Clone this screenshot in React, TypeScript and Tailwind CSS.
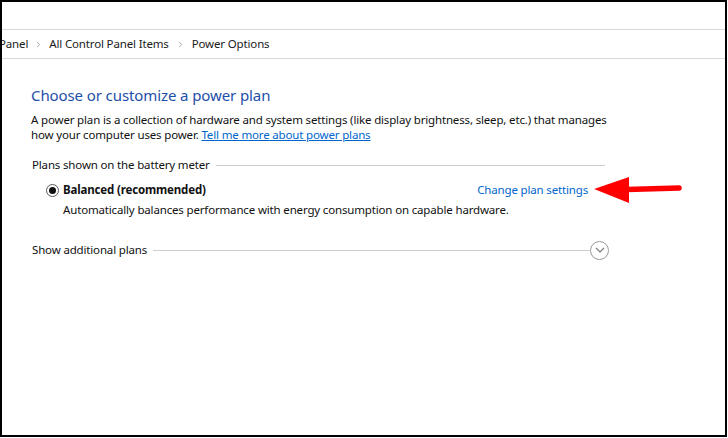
import { ChevronRight } from "lucide-react";

const font = { fontFamily: '"Noto Sans", "Open Sans", sans-serif' };

function Breadcrumb() {
    return (
        <div className="relative h-[29px] flex flex-row items-center overflow-hidden border-b border-[#d9d9d9] text-[11.5px] tracking-[-0.15px] text-[#1a1a1a] whitespace-nowrap">
            <span className="-ml-[3px]">Panel</span>
            <ChevronRight className="mx-[6px] w-[9px] h-[9px] text-[#8a8a8a]" strokeWidth={2} />
            <span>All Control Panel Items</span>
            <ChevronRight className="mx-[7px] w-[9px] h-[9px] text-[#8a8a8a]" strokeWidth={2} />
            <span>Power Options</span>
        </div>
    )
}

function Radio() {
    return (
        <div className="relative w-[13px] h-[13px] rounded-full border border-[#5a5a5a] flex justify-center items-center bg-white">
            <div className="w-[7px] h-[7px] rounded-full bg-[#111]" />
        </div>
    )
}

function Arrow() {
    return (
        <svg className="absolute left-[593px] top-[177px]" width="90" height="28" viewBox="0 0 90 28">
            <path d="M1 12 L36 0 L36 26 Z" fill="#ff0000" />
            <line x1="34" y1="12.5" x2="86" y2="11" stroke="#ff0000" strokeWidth="5.5" strokeLinecap="round" />
        </svg>
    )
}

export default function App() {
    return (
        <div className="relative w-[728px] h-[438px] bg-white overflow-hidden" style={font}>
            <div className="relative w-[727px] h-[437px] border-2 border-black flex flex-col">
                <div className="h-[28px] border-b border-[#d9d9d9]" />
                <Breadcrumb />

                <div className="relative flex flex-col pl-[29px] w-[603px] whitespace-nowrap">
                    <h1 className="mt-[25px] h-[22px] leading-[22px] text-[15px] text-[#1e4fa8] tracking-[-0.1px]">
                        Choose or customize a power plan
                    </h1>
                    <p className="mt-[6px] text-[11.5px] leading-[15px] text-[#111] tracking-[-0.16px]">
                        A power plan is a collection of hardware and system settings (like display brightness, sleep, etc.) that manages<br />
                        how your computer uses power. <span className="text-[#0066cc] underline">Tell me more about power plans</span>
                    </p>

                    <div className="mt-[15px] h-[16px] flex flex-row items-center gap-[6px] text-[11.5px] tracking-[-0.16px] text-[#111]">
                        <span className="pl-[1px]">Plans shown on the battery meter</span>
                        <div className="flex-1 h-px bg-[#cfcfcf]" />
                    </div>

                    <div className="mt-[9px] h-[16px] flex flex-row items-center pl-[15px] pr-[17px] text-[11.5px] tracking-[-0.16px]">
                        <Radio />
                        <span className="ml-[4px] font-bold text-[#111]">Balanced (recommended)</span>
                        <span className="ml-auto text-[#0066cc]">Change plan settings</span>
                    </div>
                    <div className="mt-[4px] h-[16px] flex items-center pl-[32px] text-[11.5px] tracking-[-0.16px] text-[#111]">
                        Automatically balances performance with energy consumption on capable hardware.
                    </div>

                    <div className="mt-[23px] -mr-[4px] h-[18px] flex flex-row items-center text-[11.5px] tracking-[-0.16px] text-[#111]">
                        <span className="pl-[1px]">Show additional plans</span>
                        <div className="flex-1 ml-[6px] h-px bg-[#cfcfcf]" />
                        <div className="w-[19px] h-[19px] rounded-full border border-[#9a9a9a] flex justify-center items-center">
                            <svg width="10" height="6" viewBox="0 0 10 6">
                                <path d="M1 1 L5 5 L9 1" fill="none" stroke="#7a7a7a" strokeWidth="1.1" />
                            </svg>
                        </div>
                    </div>
                </div>
            </div>
            <Arrow />
        </div>
    )
}
